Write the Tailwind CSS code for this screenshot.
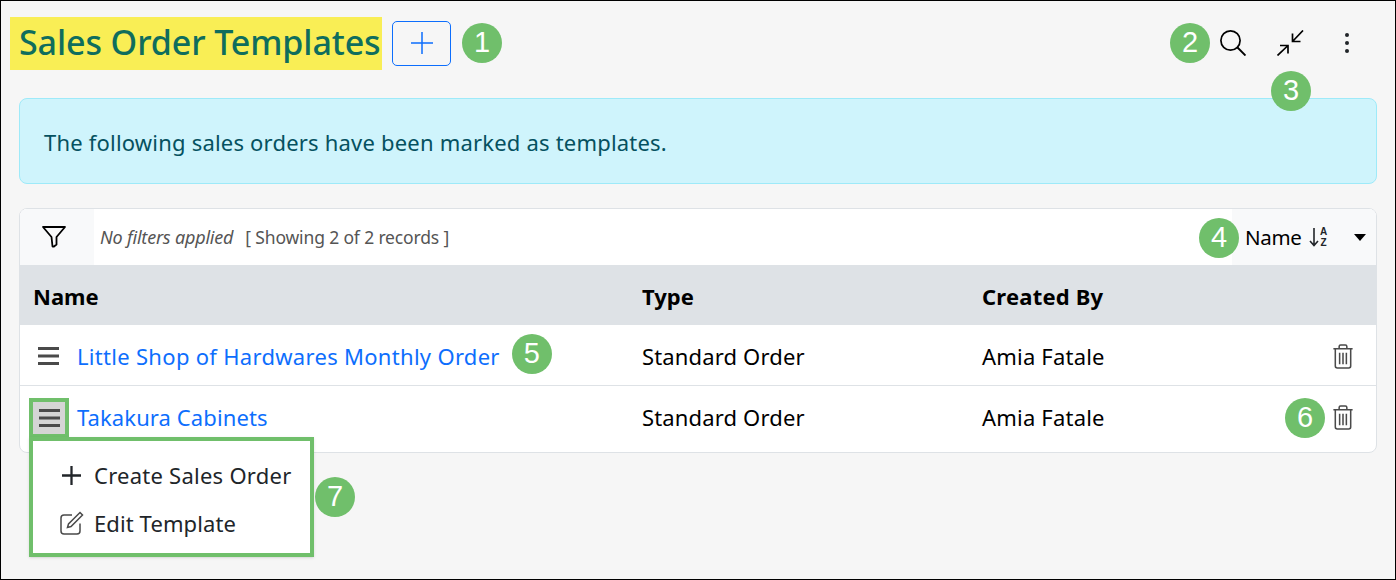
<!DOCTYPE html>
<html><head><meta charset="utf-8"><script src="https://cdn.jsdelivr.net/npm/@tailwindcss/browser@4"></script></head>
<body class="bg-[#f6f6f6]">
<div class="relative w-[1396px] h-[580px] overflow-hidden border border-black bg-[#f6f6f6] font-['Noto_Sans',sans-serif] text-[22px] text-[#212529]">

<header class="flex items-center h-[97px] pl-[9px] pr-[45px] pb-[13px]">
  <div class="flex items-center h-[53px] w-[372px] px-[9px] bg-[#f9ee55]">
    <h1 class="whitespace-nowrap pb-[2px] text-[34px] font-medium text-[#0f6d5d] tracking-[-0.1px]">Sales Order Templates</h1>
  </div>
  <button class="ml-[10px] flex items-center justify-center w-[59px] h-[45px] rounded-[5px] border border-[#0d6efd] text-[#0d6efd]">
    <svg class="w-[22px] h-[22px]" viewBox="0 0 22 22" fill="none" stroke="currentColor" stroke-width="1.5"><path d="M11 0v22M0 11h22"/></svg>
  </button>
  <span class="ml-[11px] flex items-center justify-center w-[40px] h-[40px] rounded-full bg-[#70bf6b] text-white text-[29px] font-['Liberation_Sans',sans-serif]">1</span>
  <div class="ml-auto flex items-center">
    <span class="flex items-center justify-center w-[40px] h-[40px] rounded-full bg-[#70bf6b] text-white text-[29px] font-['Liberation_Sans',sans-serif]">2</span>
    <svg class="ml-[10px] w-[26px] h-[26px]" viewBox="0 0 26 26" fill="none" stroke="#000" stroke-width="1.7"><circle cx="10.500" cy="10.500" r="9.600"/><path d="M17.500 17.500l8 8" stroke-width="1.900"/></svg>
    <svg class="ml-[31px] w-[27px] h-[26px]" viewBox="0 0 27 26" fill="none" stroke="#000" stroke-width="1.7"><path d="M26 .5L15.500 11.500M15.500 3.500v8h8M.5 25.500L11 15.500M3 15.500h8v8"/></svg>
    <svg class="ml-[40px] w-[6px] h-[22px]" viewBox="0 0 6 22" fill="#212529"><circle cx="3" cy="3" r="2"/><circle cx="3" cy="11" r="2"/><circle cx="3" cy="19" r="2"/></svg>
  </div>
</header>

<section class="mx-[18px] h-[86px] flex items-center pt-[2px] px-[24px] rounded-[8px] border border-[#9eeaf9] bg-[#cff4fc] text-[#055160]">
  <p class="text-[22px] tracking-[0.2px]">The following sales orders have been marked as templates.</p>
</section>

<section class="mt-[24px] mx-[18px] h-[245px] rounded-[8px] border border-[#dee2e6] bg-white overflow-hidden">
  <div class="flex items-center h-[56px] bg-white">
    <div class="flex items-center justify-center w-[74px] h-full bg-[#f8f9fa]">
      <svg class="w-[26px] h-[24px] -ml-[6px]" viewBox="0 0 26 24" fill="none" stroke="#000" stroke-width="1.800" stroke-linejoin="round"><path d="M2 2h22l-8.500 10v7.500l-2.500 2h-1.500L10.500 12z"/></svg>
    </div>
    <span class="ml-[6px] italic text-[18px] tracking-[-0.2px] text-[#555]">No filters applied</span>
    <span class="ml-[12px] text-[17.5px] tracking-[-0.15px] text-[#555]">[ Showing 2 of 2 records ]</span>
    <div class="ml-auto flex items-center w-[144px] h-full bg-[#f8f9fa] pl-[13px]">
      <span class="text-[20.5px] text-black tracking-[-0.3px]">Name</span>
      <svg class="ml-[7px] w-[10px] h-[20px]" viewBox="0 0 10 20" fill="none" stroke="#212529" stroke-width="1.600"><path d="M5 1v17M1 14l4 4.500 4-4.500"/></svg>
      <span class="ml-[1px] w-[8px] text-[10px] leading-[11.5px] font-bold font-['Liberation_Sans',sans-serif] text-[#212529] text-center">A<br>Z</span>
      <svg class="ml-[26px] w-[12px] h-[7px]" viewBox="0 0 12 7" fill="#000"><path d="M0 0h12L6 7z"/></svg>
    </div>
  </div>
  <div class="grid grid-cols-[609px_340px_1fr] items-center h-[60px] pt-[2px] bg-[#dee2e6] font-bold text-black text-[22px]">
    <div class="pl-[13px]">Name</div><div class="pl-[13px]">Type</div><div class="pl-[13px] tracking-[0.2px]">Created By</div>
  </div>
  <div class="grid grid-cols-[609px_340px_1fr] items-center h-[61px] pt-[2px] border-b border-[#dee2e6] text-black">
    <div class="flex items-center pl-[18px]">
      <svg class="w-[21px] h-[18px]" viewBox="0 0 21 18" fill="#4a4a4a"><path d="M0 0h21v3H0zM0 7.500h21v3H0zM0 15h21v3H0z"/></svg>
      <a class="ml-[18px] text-[#0d6efd] tracking-[0.3px] whitespace-nowrap">Little Shop of Hardwares Monthly Order</a>
      <span class="ml-[12px] mb-[4px] flex items-center justify-center w-[40px] h-[40px] rounded-full bg-[#70bf6b] text-white text-[29px] font-['Liberation_Sans',sans-serif]">5</span>
    </div>
    <div class="pl-[13px] tracking-[0.15px]">Standard Order</div>
    <div class="flex items-center justify-between pl-[13px] pr-[22px]"><span class="tracking-[0.2px]">Amia Fatale</span>
      <svg class="w-[22px] h-[25px]" viewBox="0 0 22 26" fill="none" stroke="#4a4a4a" stroke-width="1.600"><path d="M1 5h20M7 5V2.500a1.500 1.500 0 0 1 1.500-1.500h5A1.500 1.500 0 0 1 15 2.500V5M3 5v18a2 2 0 0 0 2 2h12a2 2 0 0 0 2-2V5M7.500 9v12M11 9v12M14.500 9v12"/></svg>
    </div>
  </div>
  <div class="grid grid-cols-[609px_340px_1fr] items-center h-[65px] pb-[2px] text-black">
    <div class="flex items-center pl-[9px]">
      <div class="flex items-center justify-center w-[40px] h-[40px] border-4 border-[#70bf6b] bg-[#d5d5d5]">
        <svg class="w-[21px] h-[18px]" viewBox="0 0 21 18" fill="#4a4a4a"><path d="M0 0h21v3H0zM0 7.500h21v3H0zM0 15h21v3H0z"/></svg>
      </div>
      <a class="ml-[8px] text-[#0d6efd] tracking-[0.1px]">Takakura Cabinets</a>
    </div>
    <div class="pl-[13px] tracking-[0.15px]">Standard Order</div>
    <div class="flex items-center justify-between pl-[13px] pr-[22px]"><span class="tracking-[0.2px]">Amia Fatale</span>
      <div class="flex items-center gap-[7px]">
        <span class="flex items-center justify-center w-[40px] h-[40px] rounded-full bg-[#70bf6b] text-white text-[29px] font-['Liberation_Sans',sans-serif]">6</span>
        <svg class="w-[22px] h-[25px]" viewBox="0 0 22 26" fill="none" stroke="#4a4a4a" stroke-width="1.600"><path d="M1 5h20M7 5V2.500a1.500 1.500 0 0 1 1.500-1.500h5A1.500 1.500 0 0 1 15 2.500V5M3 5v18a2 2 0 0 0 2 2h12a2 2 0 0 0 2-2V5M7.500 9v12M11 9v12M14.500 9v12"/></svg>
      </div>
    </div>
  </div>
</section>

<!-- overlays -->
<span class="absolute left-[1198px] top-[217px] flex items-center justify-center w-[40px] h-[40px] rounded-full bg-[#70bf6b] text-white text-[29px] font-['Liberation_Sans',sans-serif]">4</span>
<span class="absolute left-[1270px] top-[70px] flex items-center justify-center w-[40px] h-[40px] rounded-full bg-[#70bf6b] text-white text-[29px] font-['Liberation_Sans',sans-serif]">3</span>

<div class="absolute left-[28px] top-[436px] w-[285px] h-[120px] border-4 border-[#70bf6b] bg-white shadow-sm flex flex-col text-[22px] text-[#212529]">
  <div class="flex items-center h-[48px] mt-[10px] pl-[29px]">
    <svg class="w-[19px] h-[19px]" viewBox="0 0 20 20" fill="none" stroke="#212529" stroke-width="2.400"><path d="M10 0v20M0 10h20"/></svg>
    <span class="ml-[13px] tracking-[0.25px] whitespace-nowrap">Create Sales Order</span>
  </div>
  <div class="flex items-center h-[48px] pl-[27px]">
    <svg class="w-[24px] h-[24px]" viewBox="0 0 24 24" fill="none" stroke="#4a4a4a" stroke-width="1.500"><path d="M20 12.500V20a3 3 0 0 1-3 3H4a3 3 0 0 1-3-3V7a3 3 0 0 1 3-3h8"/><path d="M20 1.500l2.500 2.500L11 15.500l-3.500 1 1-3.500z"/></svg>
    <span class="ml-[10px] tracking-[0.1px] whitespace-nowrap">Edit Template</span>
  </div>
</div>
<span class="absolute left-[314px] top-[476px] flex items-center justify-center w-[40px] h-[40px] rounded-full bg-[#70bf6b] text-white text-[29px] font-['Liberation_Sans',sans-serif]">7</span>
</div>
</body></html>
